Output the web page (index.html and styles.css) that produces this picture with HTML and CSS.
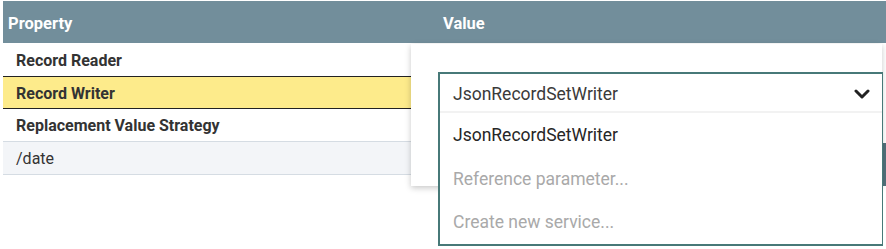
FILE: index.html
```html
<!DOCTYPE html>
<html lang="en">
<head>
    <meta charset="UTF-8">
    <title>Processor Properties</title>
    <link rel="stylesheet" href="styles.css">
</head>
<body>
    <div class="table">
        <div class="table-header">
            <div class="col-property">Property</div>
            <div class="col-value">Value</div>
        </div>
        <div class="table-body">
            <div class="row">Record Reader</div>
            <div class="row selected">Record Writer</div>
            <div class="row">Replacement Value Strategy</div>
            <div class="row dynamic">/date</div>
        </div>

        <div class="side-strip"></div>

        <div class="editor">
            <div class="combo">
                <div class="combo-field">
                    <span>JsonRecordSetWriter</span>
                    <svg class="chevron" width="16" height="10" viewBox="0 0 16 10">
                        <path d="M2 2 L8 8 L14 2" fill="none" stroke="#222" stroke-width="3" stroke-linecap="round" stroke-linejoin="round"/>
                    </svg>
                </div>
                <div class="combo-options">
                    <div class="option">JsonRecordSetWriter</div>
                    <div class="option muted">Reference parameter...</div>
                    <div class="option muted">Create new service...</div>
                </div>
            </div>
        </div>
    </div>
</body>
</html>
```

FILE: styles.css
```css
body {
    margin: 0;
    background-color: #fff;
    font-family: Roboto, "Liberation Sans", sans-serif;
    color: #333;
}
.table {
    position: relative;
    padding: 1px 0 0 3px;
    height: 248px;
}
.table-header {
    display: flex;
    height: 42px;
    padding-top: 3px;
    box-sizing: border-box;
    align-items: center;
    background-color: #728e9b;
    color: #fff;
    font-weight: bold;
    font-size: 16.5px;
}
.col-property {
    width: 437px;
    padding-left: 5px;
    box-sizing: border-box;
}
.col-value {
    flex: 1;
    padding-left: 3px;
}
.table-body {
    width: 408px;
    padding-top: 1px;
}
.row {
    height: 32px;
    line-height: 34px;
    padding-left: 13px;
    font-size: 16px;
    font-weight: bold;
    color: #333;
}
.row.selected {
    background-color: #fdeb8b;
    border-top: 1px solid #222;
    border-bottom: 1px solid #222;
    height: 31px;
    line-height: 33px;
}
.row.dynamic {
    font-weight: normal;
    background-color: #f3f5f8;
    border-top: 1px solid #d5dce3;
    border-bottom: 1px solid #d5dce3;
}
.side-strip {
    position: absolute;
    right: 0;
    top: 143px;
    width: 4px;
    height: 43px;
    background-color: #52717b;
}
.editor {
    position: absolute;
    left: 411px;
    top: 44px;
    width: 471px;
    height: 142px;
    background-color: #fff;
    box-shadow: 0 2px 6px rgba(0, 0, 0, 0.22);
    padding: 28px 0 0 27px;
    box-sizing: border-box;
}
.combo {
    width: 445px;
    border: 2px solid #477978;
    border-right-width: 1px;
    box-sizing: border-box;
    background-color: #fff;
    font-size: 17.5px;
}
.combo-field {
    display: flex;
    align-items: center;
    justify-content: space-between;
    height: 39px;
    padding: 2px 12px 0 13px;
    box-sizing: border-box;
    color: #3a3a3a;
    border-bottom: 2px solid #f2f2f2;
}
.chevron {
    display: block;
    margin-top: 1px;
}
.option {
    height: 43.5px;
    line-height: 44px;
    padding-left: 13px;
    color: #262626;
}
.option.muted {
    color: #a9a9a9;
}
```
